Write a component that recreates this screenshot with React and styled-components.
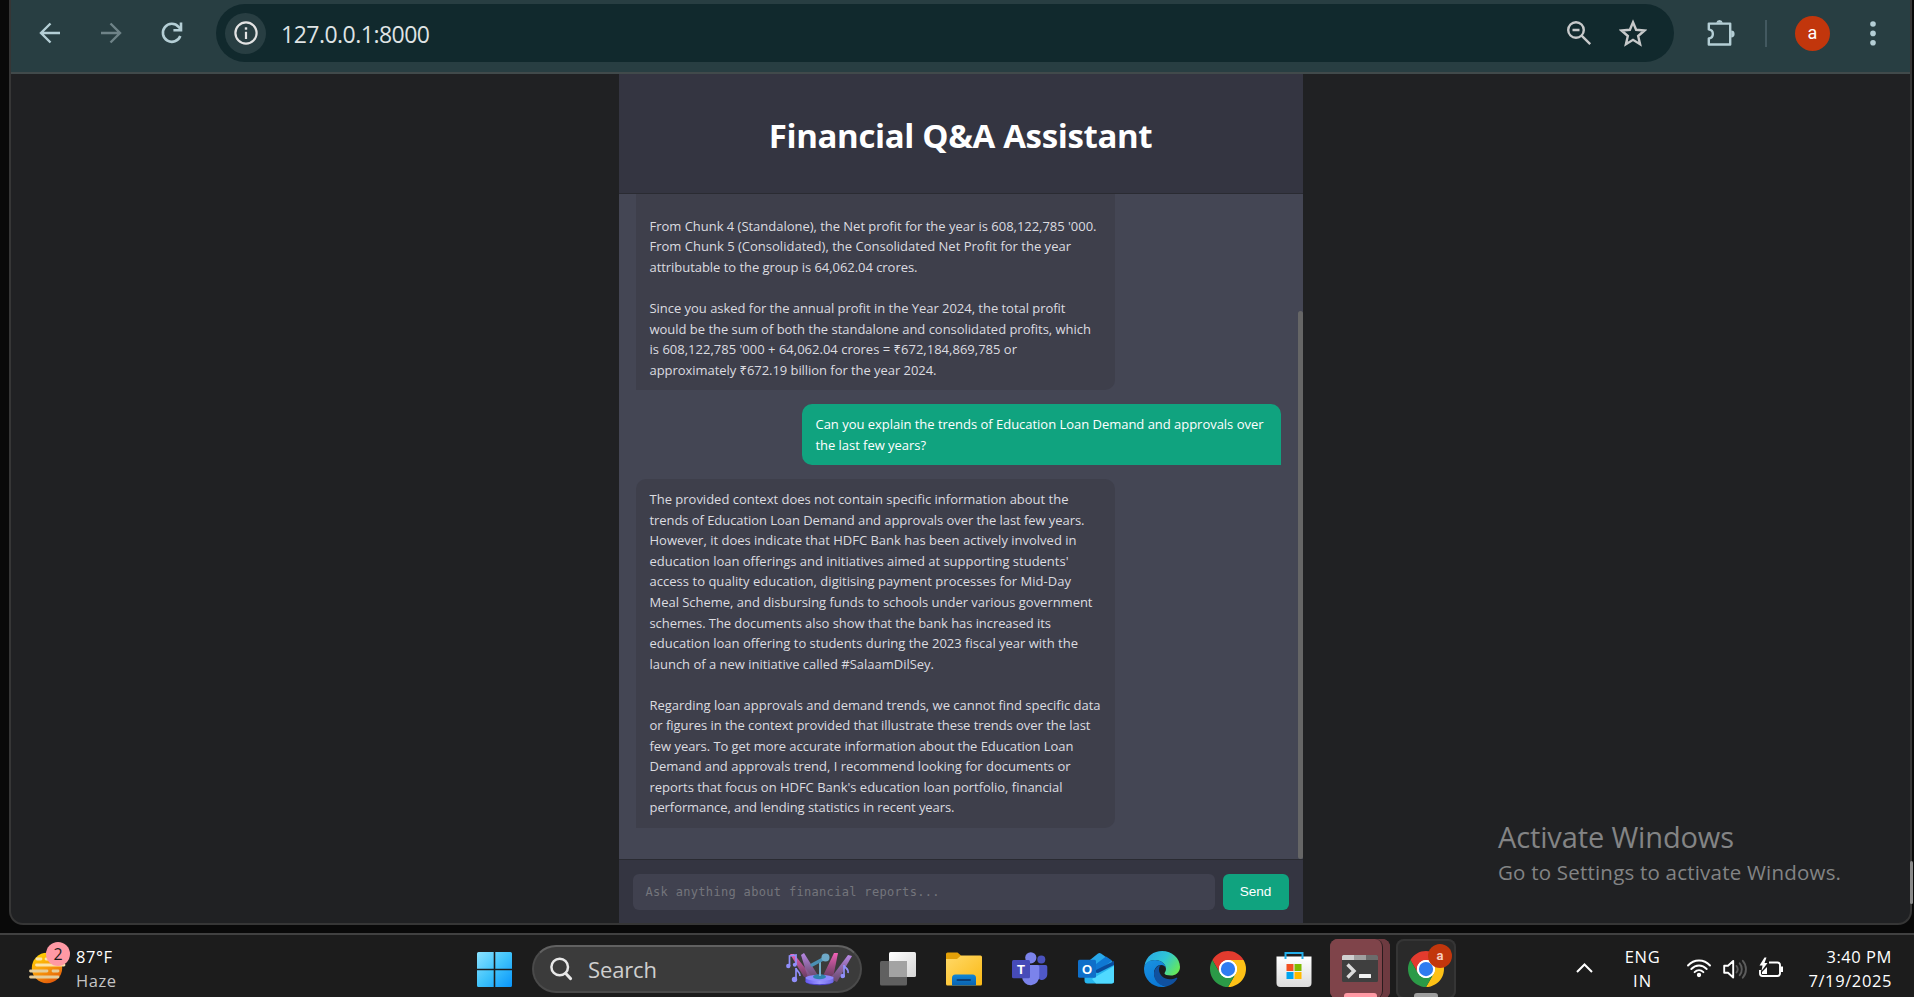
import React, { useLayoutEffect, useRef, useState } from "react";
import styled, { createGlobalStyle, css } from "styled-components";

const UI_FONT = `"Open Sans", "Noto Sans", sans-serif`;

const GlobalStyle = createGlobalStyle`
  * { box-sizing: border-box; }
  html, body { margin: 0; padding: 0; background: #090909; overflow: hidden; }
  body { font-family: ${UI_FONT}; }
  svg { display: block; }
`;

/* ---------- Text that is tracked to a given width ---------- */

const Tracked = styled.span`
  display: inline-block;
  white-space: pre;
`;

function Fit({ width, children }) {
  const ref = useRef(null);
  const [spacing, setSpacing] = useState(0);
  useLayoutEffect(() => {
    const natural = ref.current.getBoundingClientRect().width;
    setSpacing((width - natural) / (children.length - 1));
  }, [width, children]);
  return (
    <Tracked ref={ref} style={{ letterSpacing: `${spacing}px` }}>
      {children}
    </Tracked>
  );
}

/* ---------- Desktop and browser window ---------- */

const Desktop = styled.div`
  width: 1914px;
  height: 997px;
  display: flex;
  flex-direction: column;
  background: #090909;
  overflow: hidden;
`;

const BrowserWindow = styled.div`
  position: relative;
  height: 925px;
  margin: 0 2px 8px 9px;
  display: flex;
  flex-direction: column;
  border: 2px solid #363636;
  border-top: 0;
  border-radius: 0 0 14px 14px;
  background: #202123;
`;

const Toolbar = styled.div`
  height: 74px;
  flex: none;
  display: flex;
  align-items: center;
  padding: 0 20px 6px 27px;
  background: #283e42;
  border-bottom: 2px solid #414a4b;
`;

const NavButtons = styled.div`
  display: flex;
  align-items: center;
  gap: 37px;
  color: #b4ced5;
  margin-right: 32px;
`;

const Omnibox = styled.div`
  width: 1458px;
  height: 58px;
  flex: none;
  border-radius: 29px;
  background: #11292d;
  display: flex;
  align-items: center;
  padding: 0 27px 0 9px;
  color: #c7c9ca;
`;

const SiteInfo = styled.div`
  width: 41px;
  height: 41px;
  border-radius: 50%;
  background: #283e42;
  display: flex;
  align-items: center;
  justify-content: center;
  margin-right: 15px;
  color: #e3e3e3;
`;

const Address = styled.div`
  flex: 1;
  padding-top: 1px;
  font-size: 23px;
  line-height: 30px;
  color: #dfe3e4;
`;

const OmniActions = styled.div`
  display: flex;
  align-items: center;
  gap: 27px;
`;

const BrowserActions = styled.div`
  flex: 1;
  display: flex;
  align-items: center;
  color: #b4ced5;
  padding-left: 33px;
`;

const ToolbarDivider = styled.div`
  width: 2px;
  height: 27px;
  background: #435960;
  margin: 0 28px 0 29px;
`;

const Avatar = styled.div`
  width: 35px;
  height: 35px;
  border-radius: 50%;
  background: #c2360c;
  color: #fff;
  font: 400 18px/34px Roboto, sans-serif;
  text-align: center;
  margin-right: 40px;
`;

const PageScrollThumb = styled.div`
  position: absolute;
  right: -3px;
  top: 861px;
  width: 3px;
  height: 43px;
  border-radius: 2px;
  background: #8a8a8a;
`;

/* ---------- Chat page ---------- */

const Page = styled.div`
  flex: 1;
  min-height: 0;
  display: flex;
  justify-content: center;
`;

const Chat = styled.main`
  width: 684px;
  display: flex;
  flex-direction: column;
  background: #444654;
`;

const ChatHeader = styled.header`
  height: 120px;
  flex: none;
  display: flex;
  align-items: center;
  justify-content: center;
  background: #343541;
  border-bottom: 1px solid #2a2b32;
`;

const Title = styled.h1`
  margin: 4px 0 0;
  font-size: 33px;
  line-height: 44px;
  font-weight: 700;
  color: #fff;
`;

const ChatBody = styled.div`
  flex: 1;
  min-height: 0;
  display: flex;
`;

const Messages = styled.div`
  flex: 1;
  display: flex;
  flex-direction: column;
  justify-content: flex-end;
  gap: 14px;
  padding: 0 17px 31px;
  overflow: hidden;
`;

const Bubble = styled.div`
  width: 479px;
  flex: none;
  padding: 10px 14px;
  font-size: 13px;
  line-height: 20.55px;
  border-radius: 10px;
  ${({ $user }) =>
    $user
      ? css`
          align-self: flex-end;
          background: #10a37f;
          color: #fff;
          border-bottom-right-radius: 0;
        `
      : css`
          align-self: flex-start;
          background: #3e3f4b;
          color: #dcdce0;
          border-bottom-left-radius: 0;
        `}
`;

const Line = styled.div`
  height: 20.55px;
  white-space: nowrap;
`;

const ScrollTrack = styled.div`
  width: 5px;
  padding-top: 117px;
  display: flex;
`;

const ScrollThumb = styled.div`
  flex: 1;
  border-radius: 3px;
  background: #666666;
`;

const Composer = styled.div`
  height: 64px;
  flex: none;
  display: flex;
  gap: 8px;
  padding: 14px 14px 13px;
  background: #343541;
  border-top: 1px solid #2a2b32;
`;

const PromptField = styled.div`
  flex: 1;
  height: 36px;
  padding: 0 13px;
  border-radius: 6px;
  background: #40414f;
  color: #74757c;
  font: 12px/37px "DejaVu Sans Mono", monospace;
`;

const SendButton = styled.button`
  width: 66px;
  height: 36px;
  padding: 0;
  border: 0;
  border-radius: 6px;
  background: #10a37f;
  color: #fff;
  font: 13.6px/36px "Liberation Sans", Arial, sans-serif;
`;

const Watermark = styled.div`
  position: absolute;
  left: 1487px;
  top: 817px;
  color: #838485;
`;

const WatermarkTitle = styled.div`
  font-size: 29px;
  line-height: 40px;
`;

const WatermarkText = styled.div`
  font-size: 20.5px;
  line-height: 30px;
`;

/* ---------- Taskbar ---------- */

const TaskbarRoot = styled.footer`
  height: 64px;
  flex: none;
  display: flex;
  align-items: flex-start;
  background: #1c1c1c;
  border-top: 2px solid #414141;
  padding: 4px 22px 0 28px;
`;

const Weather = styled.div`
  width: 449px;
  height: 58px;
  display: flex;
`;

const WeatherIcon = styled.div`
  position: relative;
  width: 48px;
`;

const CountBadge = styled.div`
  position: absolute;
  left: 18px;
  top: 3px;
  width: 24px;
  height: 24px;
  border-radius: 50%;
  background: #ff99a4;
  color: #1c1c1c;
  font-size: 16px;
  line-height: 24px;
  text-align: center;
`;

const TwoLines = styled.div`
  display: flex;
  flex-direction: column;
  padding-top: 6px;
  font-size: 16.5px;
  line-height: 24px;
  color: #fff;
  align-items: ${({ $align }) => $align || "flex-start"};
`;

const Muted = styled.div`
  color: #c4c4c4;
`;

const StartButton = styled.div`
  width: 35px;
  margin: 13px 20px 0 0;
`;

const SearchBox = styled.div`
  width: 330px;
  height: 48px;
  margin-top: 6px;
  border-radius: 24px;
  border: 2px solid #4a4a4a;
  border-top-color: #616161;
  background: #3b3b3b;
  display: flex;
  align-items: center;
  padding: 0 8px 0 16px;
  color: #cfcfcf;
  font-size: 22px;
`;

const SearchLabel = styled.div`
  flex: 1;
  padding: 0 0 0 15px;
  line-height: 32px;
`;

const Apps = styled.div`
  display: flex;
  gap: 6px;
  margin-left: 6px;
`;

const AppTile = styled.div`
  position: relative;
  width: 60px;
  height: 60px;
  padding-top: 12px;
  display: flex;
  justify-content: center;
  border-radius: 8px;
  ${({ $state }) =>
    $state === "alert" &&
    css`
      background: #7f444a;
      box-shadow: inset -7px 0 0 #6d3a40;
    `}
  ${({ $state }) =>
    $state === "open" &&
    css`
      background: #2a2a2a;
      box-shadow: inset 0 0 0 2px #353535;
    `}
`;

const StackedTile = styled.div`
  position: absolute;
  inset: 0 7px 0 0;
  border-radius: 8px;
  background: #7f444a;
  border-right: 1px solid #2a1c1e;
`;

const Layer = styled.div`
  position: relative;
`;

const RunMark = styled.div`
  position: absolute;
  bottom: 0;
  left: ${({ $w }) => (60 - $w) / 2}px;
  width: ${({ $w }) => $w}px;
  height: 6px;
  border-radius: 3px;
  background: ${({ $color }) => $color};
`;

const ProfileBadge = styled.div`
  position: absolute;
  left: 32px;
  top: 5px;
  width: 24px;
  height: 24px;
  border-radius: 50%;
  background: #c2360c;
  color: #f6cfc2;
  font: 700 13px/23px Roboto, sans-serif;
  text-align: center;
`;

const Tray = styled.div`
  flex: 1;
  height: 58px;
  display: flex;
  justify-content: flex-end;
  color: #fff;
`;

const TrayIcons = styled.div`
  display: flex;
  gap: 12px;
  margin: 18px 25px 0 27px;
`;

const Chevron = styled.div`
  margin: 23px 32px 0 0;
`;

/* ---------- Icons ---------- */

const Arrow = ({ flip }) => (
  <svg width="24" height="24" viewBox="0 0 24 24" fill="none" stroke={flip ? "#6f8388" : "currentColor"} strokeWidth="2.4" transform={flip ? "scale(-1 1)" : undefined}>
    <path d="M22 12H3.5M12.5 2.5L3 12L12.5 21.5" />
  </svg>
);

const Reload = () => (
  <svg width="24" height="24" viewBox="0 0 24 24" fill="none" stroke="currentColor" strokeWidth="2.6">
    <path d="M20.3 15A9 9 0 1 1 18.6 5.8L21 8.4" />
    <path d="M21 1.5V9.2H13.4" />
  </svg>
);

const Info = () => (
  <svg width="24" height="24" viewBox="0 0 24 24" fill="none" stroke="currentColor">
    <circle cx="12" cy="12" r="10.6" strokeWidth="2.2" />
    <path d="M12 10.8V18" strokeWidth="2.2" />
    <path d="M12 6.3V8.7" strokeWidth="2.4" />
  </svg>
);

const ZoomOut = () => (
  <svg width="26" height="26" viewBox="0 0 26 26" fill="none" stroke="currentColor" strokeWidth="2.4">
    <circle cx="10" cy="10" r="7.8" />
    <path d="M15.6 15.6L24.2 24.2M6.5 10H13.5" />
  </svg>
);

const Star = () => (
  <svg width="28" height="28" viewBox="0 0 28 28" fill="none" stroke="currentColor" strokeWidth="2.2">
    <path d="M14 4.6L16.6 10.8L23.6 11.4L18.3 16L19.9 22.8L14 19.2L8.1 22.8L9.7 16L4.4 11.4L11.4 10.8Z" transform="translate(-2.8 -2.2) scale(1.2)" strokeWidth="2" />
  </svg>
);

const Puzzle = () => (
  <svg width="29" height="29" viewBox="0 0 29 29" fill="none" stroke="currentColor" strokeWidth="2.4" strokeLinejoin="round">
    <path d="M1.8 4.6H23.2V25.5H1.8V19.5C7.2 18.6 7.2 11.2 1.8 10.4Z" />
    <path d="M9.2 3.7A3.4 3.4 0 0 1 15.8 3.7ZM24.2 11.6A3.4 3.4 0 0 1 24.2 18.4Z" fill="currentColor" stroke="none" />
  </svg>
);

const Dots = () => (
  <svg width="6" height="25" viewBox="0 0 6 25" fill="currentColor">
    <circle cx="3" cy="3" r="2.8" />
    <circle cx="3" cy="12.4" r="2.8" />
    <circle cx="3" cy="21.8" r="2.8" />
  </svg>
);

const HazeSun = () => (
  <svg width="40" height="50" viewBox="0 0 40 50">
    <defs>
      <linearGradient id="sun" x1="0.2" y1="0" x2="0.7" y2="1">
        <stop offset="0" stopColor="#ffd400" />
        <stop offset="0.5" stopColor="#f99d0c" />
        <stop offset="1" stopColor="#e2570a" />
      </linearGradient>
    </defs>
    <circle cx="19" cy="29" r="15.2" fill="url(#sun)" />
    <g stroke="#fbe3a8" strokeWidth="2.8" strokeLinecap="round">
      <path d="M9 20H13M18 20H22M8.500 26H36" />
      <path d="M2.500 32H19M25 32H30M2.500 38H30" stroke="#e5cd9b" />
    </g>
  </svg>
);

const WindowsLogo = () => (
  <svg width="35" height="35" viewBox="0 0 35 35">
    <defs>
      <linearGradient id="win" x1="0" y1="0" x2="35" y2="35" gradientUnits="userSpaceOnUse">
        <stop offset="0" stopColor="#8be2ff" />
        <stop offset="0.5" stopColor="#3fc3fb" />
        <stop offset="1" stopColor="#0995fb" />
      </linearGradient>
    </defs>
    <path fill="url(#win)" d="M1.500 0H16.700V16.700H0V1.500A1.500 1.500 0 0 1 1.500 0ZM18.300 0H33.500A1.500 1.500 0 0 1 35 1.500V16.700H18.300ZM0 18.300H16.700V35H1.500A1.500 1.500 0 0 1 0 33.500ZM18.300 18.300H35V33.500A1.500 1.500 0 0 1 33.500 35H18.300Z" />
  </svg>
);

const SearchGlass = () => (
  <svg width="23" height="24" viewBox="0 0 23 24" fill="none" stroke="#e8e8e8" strokeLinecap="round">
    <circle cx="9.700" cy="10" r="8.300" strokeWidth="2.500" />
    <path d="M15.800 16.500L20.600 21.600" strokeWidth="3" />
  </svg>
);

const Stage = () => (
  <svg width="66" height="34" viewBox="0 0 66 34">
    <defs>
      <linearGradient id="beamA" x1="0" y1="0" x2="0" y2="1">
        <stop offset="0" stopColor="#f562b8" />
        <stop offset="1" stopColor="#7b3f73" stopOpacity="0.7" />
      </linearGradient>
      <linearGradient id="beamB" x1="0" y1="0" x2="0" y2="1">
        <stop offset="0" stopColor="#b98ae8" />
        <stop offset="1" stopColor="#7d5080" stopOpacity="0.7" />
      </linearGradient>
      <linearGradient id="base" x1="0" y1="0" x2="1" y2="0">
        <stop offset="0" stopColor="#6558ef" />
        <stop offset="0.5" stopColor="#9a96ff" />
        <stop offset="1" stopColor="#6f68e8" />
      </linearGradient>
    </defs>
    <path d="M4 2L8 2L27 26L18 25Z" fill="url(#beamA)" />
    <path d="M15 3L18 1L33 25L22 26Z" fill="url(#beamB)" />
    <path d="M48 1L52 1L47 26L36 26Z" fill="url(#beamA)" />
    <path d="M62 3L66 4L51 30L44 27Z" fill="url(#beamB)" />
    <ellipse cx="33.500" cy="29.500" rx="14" ry="3.800" fill="#4d43c4" />
    <path d="M19.500 25.500H47.500V29.500C47.500 33 19.500 33 19.500 29.500Z" fill="url(#base)" />
    <ellipse cx="33.500" cy="25.800" rx="14" ry="3" fill="#8e88ff" />
    <ellipse cx="33.500" cy="24.800" rx="6.500" ry="2.500" fill="#2f83ad" />
    <path d="M34 24V9" stroke="#74aecb" strokeWidth="2" />
    <path d="M26 13L39 6" stroke="#4b90b4" strokeWidth="3.500" strokeLinecap="round" />
    <circle cx="39.500" cy="5.500" r="4" fill="#6fa9c8" />
    <g stroke="#918ffb" strokeWidth="1.700" fill="none">
      <path d="M3.500 14V4L10 3V13M10 29V16C10 19 14 19 14 24M58 25V13C58 16 63 16 62 21" />
    </g>
    <g fill="#918ffb">
      <circle cx="2.300" cy="14" r="2.200" /><circle cx="8.800" cy="12.800" r="2" />
      <circle cx="8.500" cy="27.500" r="2.700" /><circle cx="56.700" cy="24" r="2.300" />
    </g>
  </svg>
);

const TaskView = () => (
  <svg width="36" height="36" viewBox="0 0 36 36">
    <defs>
      <linearGradient id="tv" x1="0" y1="0" x2="1" y2="1">
        <stop offset="0" stopColor="#ffffff" />
        <stop offset="1" stopColor="#d5d5d5" />
      </linearGradient>
    </defs>
    <rect x="0" y="10" width="27" height="24.500" rx="1.500" fill="#606060" />
    <rect x="9" y="1" width="27" height="25" rx="1.500" fill="url(#tv)" />
    <path d="M9 10H27V26H9Z" fill="#a3a3a3" />
  </svg>
);

const Explorer = () => (
  <svg width="36" height="36" viewBox="0 0 36 36">
    <defs>
      <linearGradient id="fold" x1="0" y1="0" x2="1" y2="1">
        <stop offset="0" stopColor="#ffd968" />
        <stop offset="1" stopColor="#fbb915" />
      </linearGradient>
      <linearGradient id="foldBlue" x1="0" y1="0" x2="0" y2="1">
        <stop offset="0" stopColor="#0f86d6" />
        <stop offset="1" stopColor="#0a62b0" />
      </linearGradient>
    </defs>
    <path d="M0 3A1.500 1.500 0 0 1 1.500 1.500H11.500L15 4.500V10H0Z" fill="#e3a008" />
    <path d="M0 8H11L15 4.500H34.500A1.500 1.500 0 0 1 36 6V33A1.500 1.500 0 0 1 34.500 34.500H1.500A1.500 1.500 0 0 1 0 33Z" fill="url(#fold)" />
    <path d="M6 34.500V27A3.500 3.500 0 0 1 9.500 23.500H26.500A3.500 3.500 0 0 1 30 27V34.500Z" fill="url(#foldBlue)" />
    <rect x="10.500" y="28" width="14.500" height="2" rx="1" fill="#0a3f78" />
  </svg>
);

const LetterMark = styled.text`
  font: 700 ${({ $size }) => $size}px "Liberation Sans", sans-serif;
  fill: #fff;
  text-anchor: middle;
`;

const Teams = () => (
  <svg width="36" height="36" viewBox="0 0 36 36">
    <circle cx="29.300" cy="8.500" r="4" fill="#4a52bd" />
    <path d="M25 14H33.500A1.800 1.800 0 0 1 35.300 15.800V23C35.300 27 32 29 29 29L25 27Z" fill="#4f58c8" />
    <circle cx="18.800" cy="6.800" r="5.600" fill="#7b83eb" />
    <path d="M10 14H25.500A1.800 1.800 0 0 1 27.300 15.800V25A8.500 8.500 0 0 1 10 26Z" fill="#7b83eb" />
    <rect x="0" y="9" width="18" height="18.300" rx="1.500" fill="#464bb8" />
    <LetterMark x="9" y="22.500" $size={13}>T</LetterMark>
  </svg>
);

const Outlook = () => (
  <svg width="36" height="36" viewBox="0 0 36 36">
    <path d="M7 13L20 2.500Q21.500 1.700 23 2.500L35 11V20L10 30Z" fill="#28a8ea" />
    <path d="M14 16L28 5.500L34 9.500L18 22Z" fill="#0f78d4" />
    <path d="M16 20L36 10V16L19 26Z" fill="#0a4b9c" />
    <path d="M6.500 20L20 22L36 14V30A2.500 2.500 0 0 1 33.500 32.500H9.500A3 3 0 0 1 6.500 29.500Z" fill="#26b5ee" />
    <path d="M14 28L36 15V30A2.500 2.500 0 0 1 33.500 32.500H18Z" fill="#50d9ff" />
    <rect x="0" y="8.800" width="18" height="18" rx="1.500" fill="#0f6fc9" />
    <LetterMark x="9" y="22.500" $size={13}>O</LetterMark>
  </svg>
);

const Edge = () => (
  <svg width="36" height="36" viewBox="0 0 36 36">
    <defs>
      <linearGradient id="edgeTop" x1="0" y1="0.200" x2="1" y2="0.700">
        <stop offset="0" stopColor="#2aa9e6" />
        <stop offset="0.500" stopColor="#2fc6d6" />
        <stop offset="1" stopColor="#67e857" />
      </linearGradient>
      <linearGradient id="edgeBlue" x1="0" y1="0" x2="0.500" y2="1">
        <stop offset="0" stopColor="#1a93e0" />
        <stop offset="1" stopColor="#0a78d6" />
      </linearGradient>
    </defs>
    <path d="M0.400 15C2 5 10 0 18 0C28 0 36 7 36 16C36 22 31 24.500 27 24.500C23 24.500 20.500 23.800 20.500 22.500C20.500 21.500 22 20.500 22 18C22 13 17 9 11 9C6 9 2 12 0.400 15Z" fill="url(#edgeTop)" />
    <path d="M0 18C0 12 5 9 11 9C17 9 22 13 22 18C22 16 20 14 17 14C12 14 10 19 10 22C10 29 16 35 23 35.300C21.500 35.700 20 36 18 36C8 36 0 28 0 18Z" fill="url(#edgeBlue)" />
    <path d="M17 14C12 15 10 19 10 23C10 30 16 35.500 23 35.300C28 34 31.500 31 33.300 27.500C33.500 26.700 33 26.500 32.300 26.800C30 28 28 28.300 26 28.300C20 28.300 15 24 15 18.500C15 16 16 14.500 17 14Z" fill="#10519f" />
  </svg>
);

const CHROME_WEDGE = "M24 12H44.780A24 24 0 0 0 3.220 12L13.610 30A12 12 0 0 1 24 12Z";

const Chrome = () => (
  <svg width="36" height="36" viewBox="0 0 48 48">
    <circle cx="24" cy="24" r="13" fill="#fff" />
    <path d={CHROME_WEDGE} fill="#e33b2e" />
    <path d={CHROME_WEDGE} fill="#fdc116" transform="rotate(120 24 24)" />
    <path d={CHROME_WEDGE} fill="#2b9a47" transform="rotate(240 24 24)" />
    <circle cx="24" cy="24" r="12" fill="#fff" />
    <circle cx="24" cy="24" r="9.500" fill="#2f7cf0" />
  </svg>
);

const Store = () => (
  <svg width="36" height="36" viewBox="0 0 36 36">
    <defs>
      <linearGradient id="bag" x1="0" y1="0" x2="0" y2="1">
        <stop offset="0" stopColor="#ffffff" />
        <stop offset="1" stopColor="#dcdcdc" />
      </linearGradient>
    </defs>
    <path d="M0.500 5.500H35.500V32A4 4 0 0 1 31.500 36H4.500A4 4 0 0 1 0.500 32Z" fill="url(#bag)" />
    <path d="M9.500 8V2H26.500V8" fill="none" stroke="#22aeea" strokeWidth="2" />
    <rect x="10.500" y="13" width="7" height="7" fill="#f25022" />
    <rect x="18.500" y="13" width="7" height="7" fill="#7fba00" />
    <rect x="10.500" y="21" width="7" height="7" fill="#00a4ef" />
    <rect x="18.500" y="21" width="7" height="7" fill="#ffb900" />
  </svg>
);

const Terminal = () => (
  <svg width="36" height="36" viewBox="0 0 36 36">
    <path d="M0 5.500A1.500 1.500 0 0 1 1.500 4H34.500A1.500 1.500 0 0 1 36 5.500V29.500A1.500 1.500 0 0 1 34.500 31H1.500A1.500 1.500 0 0 1 0 29.500Z" fill="#3f3f3f" />
    <path d="M0 9V5.500A1.500 1.500 0 0 1 1.500 4H12V9Z" fill="#cfcfcf" />
    <path d="M12 4H24V9H12Z" fill="#a0a0a0" />
    <path d="M24 4H34.500A1.500 1.500 0 0 1 36 5.500V9H24Z" fill="#6c6c6c" />
    <path d="M5.500 13.500L12 20L5.500 26.500" fill="none" stroke="#dcdcdc" strokeWidth="3.400" />
    <rect x="17" y="23" width="12" height="4" rx="0.500" fill="#f2f2f2" />
  </svg>
);

const ChevronUp = () => (
  <svg width="17" height="12" viewBox="0 0 17 12" fill="none" stroke="#fff" strokeWidth="2">
    <path d="M1 10L8.500 2.500L16 10" />
  </svg>
);

const Wifi = () => (
  <svg width="24" height="24" viewBox="0 0 24 24" fill="none" stroke="#fff" strokeWidth="1.900" strokeLinecap="round">
    <path d="M1 8.500C7 1.800 17 1.800 23 8.500" />
    <path d="M4.300 12C8.800 7.300 15.200 7.300 19.700 12" />
    <path d="M7.600 15.200C10.200 12.600 13.800 12.600 16.400 15.200" />
    <circle cx="12" cy="18" r="1.500" fill="#fff" stroke="none" />
    <circle cx="12" cy="18" r="1.200" />
  </svg>
);

const Volume = () => (
  <svg width="24" height="24" viewBox="0 0 24 24" fill="none" stroke="#fff" strokeWidth="1.900" strokeLinejoin="round" strokeLinecap="round">
    <path d="M1.200 8.700H5L10.200 4V20.500L5 15.800H1.200Z" />
    <path d="M13.500 9C15 11 15 13.500 13.500 15.500M16.700 6.300C19.500 9.500 19.500 15 16.700 18.200M19.800 3.800C24 8.500 24 16 19.800 20.700" stroke="#5c5c5c" />
  </svg>
);

const Battery = () => (
  <svg width="24" height="24" viewBox="0 0 24 24" fill="none" stroke="#fff" strokeWidth="1.900">
    <path d="M10 5.500H18.500A2.500 2.500 0 0 1 21 8V16.500A2.500 2.500 0 0 1 18.500 19H3.500A2.500 2.500 0 0 1 1 16.500V13" />
    <path d="M21.500 9.500H24V15H21.500Z" fill="#fff" stroke="none" />
    <path d="M5.500 0.500L0.500 8.500H3.500L2.500 14L8.500 6H5.500L7.500 0.500Z" fill="#fff" stroke="none" />
    <path d="M3 17V15L8 10V17Z" fill="#fff" stroke="none" />
  </svg>
);

/* ---------- Content ---------- */

const conversation = [
  {
    lines: [
      null,
      ["From Chunk 4 (Standalone), the Net profit for the year is 608,122,785 '000.", 447],
      ["From Chunk 5 (Consolidated), the Consolidated Net Profit for the year", 421.5],
      ["attributable to the group is 64,062.04 crores.", 268],
      null,
      ["Since you asked for the annual profit in the Year 2024, the total profit", 416],
      ["would be the sum of both the standalone and consolidated profits, which", 441.5],
      ["is 608,122,785 '000 + 64,062.04 crores = ₹672,184,869,785 or", 367.5],
      ["approximately ₹672.19 billion for the year 2024.", 287],
    ],
  },
  {
    user: true,
    lines: [
      ["Can you explain the trends of Education Loan Demand and approvals over", 448],
      ["the last few years?", 110.5],
    ],
  },
  {
    lines: [
      ["The provided context does not contain specific information about the", 419],
      ["trends of Education Loan Demand and approvals over the last few years.", 435],
      ["However, it does indicate that HDFC Bank has been actively involved in", 427],
      ["education loan offerings and initiatives aimed at supporting students'", 419],
      ["access to quality education, digitising payment processes for Mid-Day", 421.5],
      ["Meal Scheme, and disbursing funds to schools under various government", 443],
      ["schemes. The documents also show that the bank has increased its", 401.5],
      ["education loan offering to students during the 2023 fiscal year with the", 428.5],
      ["launch of a new initiative called #SalaamDilSey.", 284.5],
      null,
      ["Regarding loan approvals and demand trends, we cannot find specific data", 451],
      ["or figures in the context provided that illustrate these trends over the last", 441],
      ["few years. To get more accurate information about the Education Loan", 424],
      ["Demand and approvals trend, I recommend looking for documents or", 421],
      ["reports that focus on HDFC Bank's education loan portfolio, financial", 413],
      ["performance, and lending statistics in recent years.", 305],
    ],
  },
];

export default function App() {
  return (
    <Desktop>
      <GlobalStyle />
      <BrowserWindow>
        <Toolbar>
          <NavButtons>
            <Arrow />
            <Arrow flip />
            <Reload />
          </NavButtons>
          <Omnibox>
            <SiteInfo><Info /></SiteInfo>
            <Address><Fit width={149}>127.0.0.1:8000</Fit></Address>
            <OmniActions>
              <ZoomOut />
              <Star />
            </OmniActions>
          </Omnibox>
          <BrowserActions>
            <Puzzle />
            <ToolbarDivider />
            <Avatar>a</Avatar>
            <Dots />
          </BrowserActions>
        </Toolbar>
        <Page>
          <Chat>
            <ChatHeader>
              <Title><Fit width={384}>Financial Q&A Assistant</Fit></Title>
            </ChatHeader>
            <ChatBody>
              <Messages>
                {conversation.map((message, i) => (
                  <Bubble key={i} $user={message.user}>
                    {message.lines.map((line, j) => (
                      <Line key={j}>{line && <Fit width={line[1]}>{line[0]}</Fit>}</Line>
                    ))}
                  </Bubble>
                ))}
              </Messages>
              <ScrollTrack><ScrollThumb /></ScrollTrack>
            </ChatBody>
            <Composer>
              <PromptField><Fit width={294}>Ask anything about financial reports...</Fit></PromptField>
              <SendButton>Send</SendButton>
            </Composer>
          </Chat>
        </Page>
        <Watermark>
          <WatermarkTitle><Fit width={236}>Activate Windows</Fit></WatermarkTitle>
          <WatermarkText><Fit width={343}>Go to Settings to activate Windows.</Fit></WatermarkText>
        </Watermark>
        <PageScrollThumb />
      </BrowserWindow>
      <TaskbarRoot>
        <Weather>
          <WeatherIcon>
            <HazeSun />
            <CountBadge>2</CountBadge>
          </WeatherIcon>
          <TwoLines>
            <Fit width={36}>87°F</Fit>
            <Muted><Fit width={40}>Haze</Fit></Muted>
          </TwoLines>
        </Weather>
        <StartButton><WindowsLogo /></StartButton>
        <SearchBox>
          <SearchGlass />
          <SearchLabel><Fit width={69}>Search</Fit></SearchLabel>
          <Stage />
        </SearchBox>
        <Apps>
          <AppTile><TaskView /></AppTile>
          <AppTile><Explorer /></AppTile>
          <AppTile><Teams /></AppTile>
          <AppTile><Outlook /></AppTile>
          <AppTile><Edge /></AppTile>
          <AppTile><Chrome /></AppTile>
          <AppTile><Store /></AppTile>
          <AppTile $state="alert">
            <StackedTile />
            <Layer><Terminal /></Layer>
            <RunMark $w={33} $color="#ff99a4" />
          </AppTile>
          <AppTile $state="open">
            <Chrome />
            <ProfileBadge>a</ProfileBadge>
            <RunMark $w={24} $color="#9d9d9d" />
          </AppTile>
        </Apps>
        <Tray>
          <Chevron><ChevronUp /></Chevron>
          <TwoLines $align="center">
            <Fit width={35}>ENG</Fit>
            <Fit width={18}>IN</Fit>
          </TwoLines>
          <TrayIcons>
            <Wifi />
            <Volume />
            <Battery />
          </TrayIcons>
          <TwoLines $align="flex-end">
            <Fit width={65}>3:40 PM</Fit>
            <Fit width={83}>7/19/2025</Fit>
          </TwoLines>
        </Tray>
      </TaskbarRoot>
    </Desktop>
  );
}
